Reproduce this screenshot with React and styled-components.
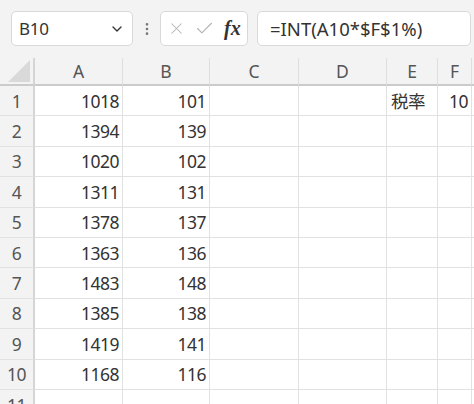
import React from 'react'
import styled, { createGlobalStyle } from 'styled-components'
import { ChevronDown, EllipsisVertical, X, Check } from 'lucide-react'

const GlobalStyle = createGlobalStyle`
  body {
    margin: 0;
    background: #f3f3f3;
    font-family: "Noto Sans", "Noto Sans CJK JP", sans-serif;
    overflow: hidden;
  }
`

const columns = ['A', 'B', 'C', 'D', 'E', 'F', '']
const widths = '35px 88px 87px 89px 88px 51px 34px 1fr'

const data = [
  [1018, 101, '', '', '税率', 10],
  [1394, 139],
  [1020, 102],
  [1311, 131],
  [1378, 137],
  [1363, 136],
  [1483, 148],
  [1385, 138],
  [1419, 141],
  [1168, 116],
  [],
]

const Page = styled.div`
  width: 474px;
  height: 404px;
  overflow: hidden;
`

const Toolbar = styled.div`
  display: flex;
  align-items: flex-start;
  height: 58px;
  padding: 11px 0 0 11px;
  box-sizing: border-box;
`

const Box = styled.div`
  height: 35px;
  box-sizing: border-box;
  background: #fff;
  border: 1px solid #d9d9d9;
  border-radius: 5px;
  display: flex;
  align-items: center;
`

const NameBox = styled(Box)`
  width: 122px;
  padding: 0 7px 0 7px;
  justify-content: space-between;
  font-size: 17px;
  letter-spacing: -0.3px;
  color: #333;
`

const Dots = styled.div`
  width: 27px;
  height: 35px;
  display: flex;
  align-items: center;
  justify-content: center;
  color: #777;
`

const FxBox = styled(Box)`
  width: 88px;
  padding: 0 5px 0 6px;
  gap: 8px;
  color: #b4b4b4;
`

const Fx = styled.span`
  font-family: "Liberation Serif", serif;
  font-style: italic;
  font-weight: bold;
  font-size: 20px;
  color: #333;
  margin-left: 1px;
`

const FormulaBox = styled(Box)`
  flex: 1;
  margin-left: 9px;
  margin-right: 3px;
  padding-left: 12px;
  font-size: 18.5px;
  color: #333;
`

const Sheet = styled.div`
  display: grid;
  grid-template-columns: ${widths};
  grid-template-rows: 28px repeat(11, 30.4px);
`

const Corner = styled.div`
  background: #f3f3f3;
  border-bottom: 2px solid #cbcbcb;
  border-right: 2px solid #d5d5d5;
  box-sizing: border-box;
  display: flex;
  align-items: flex-end;
  justify-content: flex-end;
  padding: 0 3px 2px 0;
`

const ColHead = styled.div`
  background: #f3f3f3;
  border-bottom: 2px solid #cbcbcb;
  border-right: 1px solid #dedede;
  box-sizing: border-box;
  display: flex;
  align-items: center;
  justify-content: center;
  font-size: 17.5px;
  color: #555;
`

const RowHead = styled.div`
  background: #f3f3f3;
  border-right: 2px solid #d5d5d5;
  border-bottom: 1px solid #e1e1e1;
  box-sizing: border-box;
  display: flex;
  align-items: center;
  justify-content: center;
  font-size: 17.5px;
  letter-spacing: -0.5px;
  color: #555;
`

const Cell = styled.div`
  background: #fff;
  border-right: 1px solid #e1e1e1;
  border-bottom: 1px solid #e1e1e1;
  box-sizing: border-box;
  display: flex;
  align-items: center;
  justify-content: ${p => (p.$num ? 'flex-end' : 'flex-start')};
  padding: 0 3px 0 4px;
  font-size: 17.5px;
  letter-spacing: -0.5px;
  color: #333;
  white-space: nowrap;
  overflow: hidden;
`

const App = () => {
  return (
    <Page>
      <GlobalStyle />
      <Toolbar>
        <NameBox>
          B10
          <ChevronDown size={16} strokeWidth={2} color="#333" />
        </NameBox>
        <Dots>
          <EllipsisVertical size={16} strokeWidth={2} />
        </Dots>
        <FxBox>
          <X size={19} strokeWidth={1.3} />
          <Check size={21} strokeWidth={1.3} />
          <Fx>fx</Fx>
        </FxBox>
        <FormulaBox>=INT(A10*$F$1%)</FormulaBox>
      </Toolbar>
      <Sheet>
        <Corner>
          <svg width="22" height="22" viewBox="0 0 22 22">
            <polygon points="22,0 22,22 0,22" fill="#d9d9d9" />
          </svg>
        </Corner>
        {columns.map((c, i) => (
          <ColHead key={i}>{c}</ColHead>
        ))}
        {data.map((row, r) => (
          <React.Fragment key={r}>
            <RowHead>{r + 1}</RowHead>
            {columns.map((_, c) => {
              const v = row[c]
              return (
                <Cell key={c} $num={typeof v === 'number'}>
                  {v}
                </Cell>
              )
            })}
          </React.Fragment>
        ))}
      </Sheet>
    </Page>
  )
}

export default App
